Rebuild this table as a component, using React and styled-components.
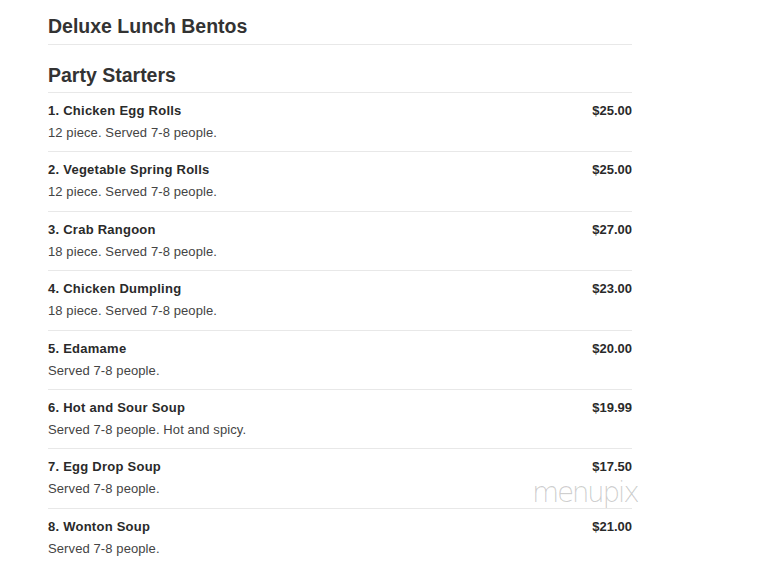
import styled, { createGlobalStyle } from "styled-components";

const GlobalStyle = createGlobalStyle`
  body {
    margin: 0;
    background: #fff;
    font-family: "Liberation Sans", Arial, sans-serif;
    color: #333;
  }
`;

const items = [
  { name: "1. Chicken Egg Rolls", price: "$25.00", desc: "12 piece. Served 7-8 people." },
  { name: "2. Vegetable Spring Rolls", price: "$25.00", desc: "12 piece. Served 7-8 people." },
  { name: "3. Crab Rangoon", price: "$27.00", desc: "18 piece. Served 7-8 people." },
  { name: "4. Chicken Dumpling", price: "$23.00", desc: "18 piece. Served 7-8 people." },
  { name: "5. Edamame", price: "$20.00", desc: "Served 7-8 people." },
  { name: "6. Hot and Sour Soup", price: "$19.99", desc: "Served 7-8 people. Hot and spicy." },
  { name: "7. Egg Drop Soup", price: "$17.50", desc: "Served 7-8 people." },
  { name: "8. Wonton Soup", price: "$21.00", desc: "Served 7-8 people." },
];

const Page = styled.main`
  position: relative;
  width: 584px;
  padding: 15px 0 0 48px;
`;

// section headings
const SectionTitle = styled.h2`
  margin: 0;
  padding: ${(p) => (p.$first ? "0 0 6px" : "19px 0 5px")};
  font-size: 19.5px;
  font-weight: 700;
  color: #333;
  border-bottom: 1px solid #e8e8e8;
`;

// menu items
const Item = styled.div`
  padding: 10px 0 11.4px;
  border-bottom: 1px solid #e8e8e8;
  &:last-child {
    border-bottom: none;
  }
`;

const ItemRow = styled.div`
  display: flex;
  justify-content: space-between;
  align-items: baseline;
`;

const ItemName = styled.span`
  font-size: 13px;
  font-weight: 700;
  letter-spacing: 0.25px;
  color: #2a2a2a;
`;

const Price = styled.span`
  font-size: 13px;
  font-weight: 700;
  color: #2a2a2a;
`;

const Desc = styled.div`
  margin-top: 7px;
  font-size: 13px;
  letter-spacing: 0.1px;
  color: #444;
`;

// watermark
const Watermark = styled.div`
  position: absolute;
  left: 532px;
  top: 479px;
  font-family: "DejaVu Sans", sans-serif;
  font-size: 28px;
  line-height: 1;
  font-weight: 200;
  letter-spacing: -2.4px;
  color: rgba(0, 0, 0, 0.2);
  pointer-events: none;
  z-index: 1;
`;

export default function App() {
  return (
    <>
      <GlobalStyle />
      <Page>
        <Watermark>menupix</Watermark>
        <SectionTitle $first>Deluxe Lunch Bentos</SectionTitle>
        <SectionTitle>Party Starters</SectionTitle>
        {items.map((item) => (
          <Item key={item.name}>
            <ItemRow>
              <ItemName>{item.name}</ItemName>
              <Price>{item.price}</Price>
            </ItemRow>
            <Desc>{item.desc}</Desc>
          </Item>
        ))}
      </Page>
    </>
  );
}
